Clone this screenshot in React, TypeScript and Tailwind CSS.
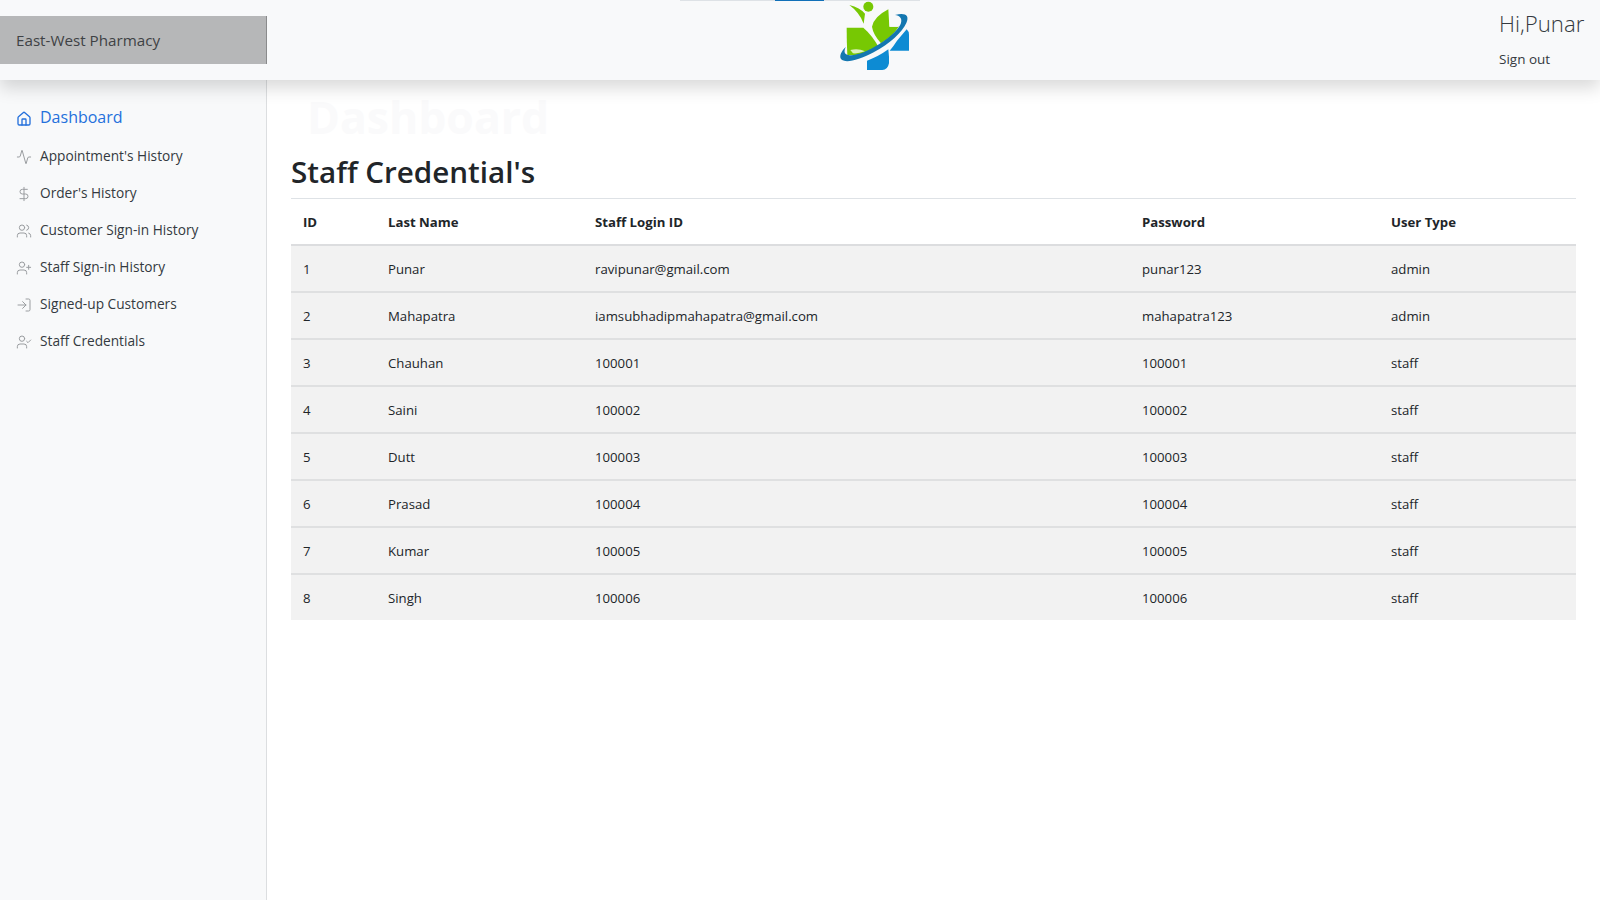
import { Activity, DollarSign, House, LogIn, UserCheck, UserPlus, Users } from "lucide-react";

const NAV = [
  { icon: Activity, label: "Appointment's History" },
  { icon: DollarSign, label: "Order's History" },
  { icon: Users, label: "Customer Sign-in History" },
  { icon: UserPlus, label: "Staff Sign-in History" },
  { icon: LogIn, label: "Signed-up Customers" },
  { icon: UserCheck, label: "Staff Credentials" },
];

const STAFF = [
  { id: 1, lastName: "Punar", login: "ravipunar@gmail.com", password: "punar123", type: "admin" },
  { id: 2, lastName: "Mahapatra", login: "iamsubhadipmahapatra@gmail.com", password: "mahapatra123", type: "admin" },
  { id: 3, lastName: "Chauhan", login: "100001", password: "100001", type: "staff" },
  { id: 4, lastName: "Saini", login: "100002", password: "100002", type: "staff" },
  { id: 5, lastName: "Dutt", login: "100003", password: "100003", type: "staff" },
  { id: 6, lastName: "Prasad", login: "100004", password: "100004", type: "staff" },
  { id: 7, lastName: "Kumar", login: "100005", password: "100005", type: "staff" },
  { id: 8, lastName: "Singh", login: "100006", password: "100006", type: "staff" },
];

/* logo: green figure and leaf over a blue cross, with an orbit ring */
function Logo() {
  return (
    <svg viewBox="0 0 240 225" className="h-[75px] w-20 shrink-0">
      <path d="M215 88q7 6 7 16v48h-58q12-14 22-30z" fill="#0d8bd3" />
      <path d="M96 182q34-12 64-34 3 24 2 42-4 20-20 20H96z" fill="#0d8bd3" />
      <path d="M35 83h50q28 24 48 62-34 20-73 20H37q-2-40-2-82z" fill="#77c803" />
      <path d="M160 28l3 52h26q3-4 1 2-16 26-52 48-24-28-27-50 6-30 49-52z" fill="#77c803" />
      <path d="M164 54h16q8 4 9 26h-25z" fill="#f8f9fa" />
      <circle cx="100" cy="20" r="15" fill="#77c803" />
      <path d="M43 15q32 8 47 26l-4 30Q74 38 43 15z" fill="#77c803" />
      <path d="M46 150q24-6 44 4-22 8-36 6z" fill="#dff0c0" />
      <path d="M180 45c32-8 44 2 34 24-12 28-50 62-98 88-46 24-86 34-98 20-6-10 2-24 14-36-6 14-4 22 8 24 22 4 56-10 92-32 38-24 62-50 66-64 4-14-4-22-18-24z" fill="#1477b0" />
    </svg>
  );
}

export default function App() {
  return (
    <div className="flex min-h-screen flex-col bg-white font-['Open_Sans','Noto_Sans',sans-serif] text-[#212529]">
      <header className="relative z-10 flex h-20 items-center bg-[#f8f9fa] shadow-[0_8px_16px_rgba(0,0,0,0.15)]">
        <div className="absolute left-[680px] top-0 h-px w-[240px] bg-[#dee2e6]">
          <div className="ml-[95px] h-px w-[49px] bg-[#1170b8]" />
        </div>
        <div className="flex h-12 w-[267px] shrink-0 items-center border-r border-[#8a8b8c] bg-[#b6b7b8] pb-px pl-4 text-[15.2px] text-[#3f4245]">
          <span className="mt-0.5">East-West Pharmacy</span>
        </div>
        <div className="ml-[568px] self-start">
          <Logo />
        </div>
        <div className="ml-auto w-[101px] shrink-0 self-start pt-[7px]">
          <div className="text-[22.2px] font-light leading-[34px] text-[#343a40]">Hi,Punar</div>
          <div className="mt-2 text-[13.5px] leading-5 text-[#343a40]">Sign out</div>
        </div>
      </header>

      <div className="flex flex-1">
        <aside className="h-[820px] w-[267px] shrink-0 border-r border-[#dcdee0] bg-[#f8f9fa] pt-[22px] text-[#343a40]">
          <div className="flex h-[30px] items-center pl-4 text-[#2470dc]">
            <House className="mt-[3px] size-4" strokeWidth={2} />
            <span className="ml-2 text-[16px] font-medium leading-[30px]">Dashboard</span>
          </div>
          <ul className="mt-[6px]">
            {NAV.map((item) => (
              <li key={item.label} className="flex h-[37px] items-center pl-4 text-[13.7px] font-medium">
                <item.icon className="size-4 shrink-0 text-[#9a9da0]" strokeWidth={1.5} />
                <span className="ml-2">{item.label}</span>
              </li>
            ))}
          </ul>
        </aside>

        <main className="min-w-0 flex-1 px-6">
          <div className="ml-4 h-[73px] pt-1 text-[44.5px] font-bold leading-[66px] text-[#fafafb]">Dashboard</div>
          <h2 className="text-[29.6px] font-semibold leading-[38px]">Staff Credential's</h2>
          <div className="mt-[7px] h-px bg-[#dee2e6]" />
          <table className="w-full table-fixed border-collapse text-[13.2px]">
            <colgroup>
              <col className="w-[85px]" />
              <col className="w-[207px]" />
              <col className="w-[547px]" />
              <col className="w-[249px]" />
              <col />
            </colgroup>
            <thead>
              <tr className="h-[46px] border-b-2 border-[#dcdddf] text-left">
                <th className="px-3 pt-[2px] font-bold">ID</th>
                <th className="px-3 pt-[2px] font-bold">Last Name</th>
                <th className="px-3 pt-[2px] font-bold">Staff Login ID</th>
                <th className="px-3 pt-[2px] font-bold">Password</th>
                <th className="px-3 pt-[2px] font-bold">User Type</th>
              </tr>
            </thead>
            <tbody>
              {STAFF.map((row) => (
                <tr key={row.id} className="h-[47px] border-b-2 border-[#dfe0e1] bg-[#f2f2f2] last:h-[46px] last:border-b-0">
                  <td className="px-3 pt-[2px]">{row.id}</td>
                  <td className="px-3 pt-[2px]">{row.lastName}</td>
                  <td className="px-3 pt-[2px]">{row.login}</td>
                  <td className="px-3 pt-[2px]">{row.password}</td>
                  <td className="px-3 pt-[2px]">{row.type}</td>
                </tr>
              ))}
            </tbody>
          </table>
        </main>
      </div>
    </div>
  );
}
